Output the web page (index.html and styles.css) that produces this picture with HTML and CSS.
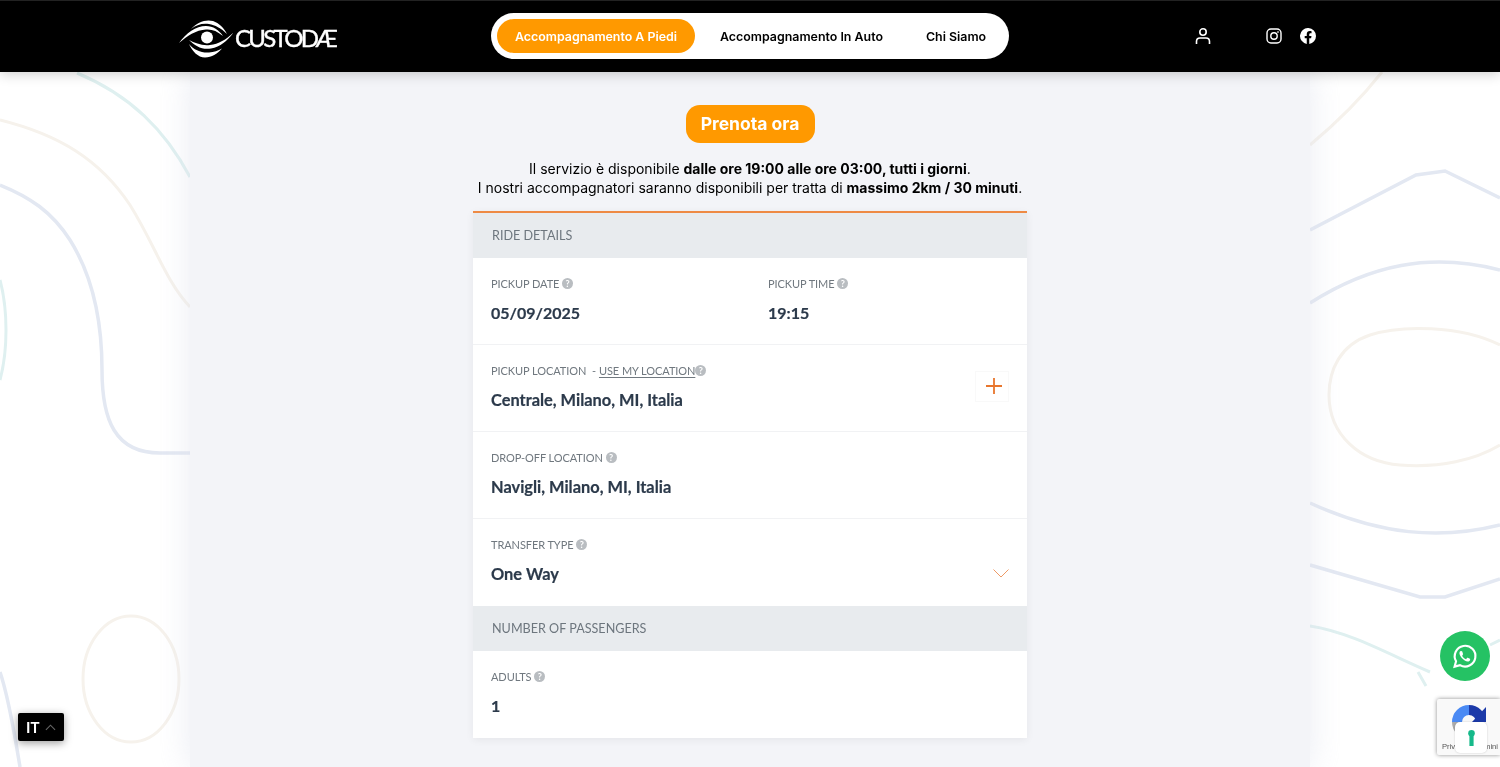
FILE: index.html
```html
<!DOCTYPE html>
<html lang="en">

<head>
    <meta charset="UTF-8">
    <meta name="viewport" content="width=device-width, initial-scale=1.0">
    <title>Custodae - Prenota ora</title>
    <link rel="stylesheet" href="styles.css">
</head>

<body>
    <!-- Decorative map lines behind the page -->
    <svg class="bg-lines" viewBox="0 0 1500 767" fill="none" aria-hidden="true">
        <g stroke="#e3e8f2" stroke-width="3.5">
            <path d="M0 185C30 197 52 212 70 240C92 275 102 320 102 370C102 420 115 453 160 453H190" />
            <path d="M0 672C8 695 14 730 20 767" />
            <path d="M1310 230L1416 175L1445 171L1500 198" />
            <path d="M1310 303C1370 265 1430 252 1500 270" />
            <path d="M1310 503C1380 535 1440 540 1500 525" />
            <path d="M1310 565L1420 597H1445L1500 579" />
        </g>
        <g stroke="#f6f2ec" stroke-width="3">
            <path d="M0 120C60 135 100 160 130 205C155 245 165 280 190 307" />
            <path d="M1310 145C1340 120 1360 100 1382 72" />
            <ellipse cx="131" cy="679" rx="48" ry="63" />
            <path d="M1500 345C1460 325 1400 325 1370 335C1340 345 1329 370 1329 395C1329 435 1360 462 1400 465C1440 468 1475 460 1500 445" />
        </g>
        <g stroke="#dff0f0" stroke-width="3">
            <path d="M77 73C130 95 165 130 190 177" />
            <path d="M0 280C8 310 8 350 0 380" />
            <path d="M1310 626C1350 632 1390 655 1430 672M1418 672L1426 686M1490 645L1500 640" />
        </g>
    </svg>

    <header class="topbar">
        <div class="logo">
            <svg class="logo-eye" viewBox="0 0 54 38" fill="#fff">
                <circle cx="28" cy="17.5" r="6" />
                <path d="M0 23C7 13 17 6 27 6C34 6 40 10 44 16C38 11 33 9 27 9.500C17 10 8 16 0 23Z" />
                <path d="M12 9C18 2 27 -1 34 1C40 3 45 8 48 14C42 8 36 5 30 4C23 3 17 5 12 9Z" />
                <path d="M55 12C49 20 42 27 32 28.500C23 30 16 26 10 20C16 23 23 26 31 25C40 24 48 19 55 12Z" />
                <path d="M10 24C15 30 22 33 30 32.500C35 32 39 31 43 28.500C38 34 33 37.500 26 37.500C19 37.500 13 31 10 24Z" />
            </svg>
            <span class="logo-text">CUSTODÆ</span>
        </div>

        <nav class="main-nav">
            <a class="nav-link active">Accompagnamento A Piedi</a>
            <a class="nav-link">Accompagnamento In Auto</a>
            <a class="nav-link">Chi Siamo</a>
        </nav>

        <div class="top-icons">
            <svg class="icon-user" viewBox="0 0 16 16" fill="none" stroke="#fff" stroke-width="1.6">
                <circle cx="8" cy="4" r="3.2" />
                <path d="M1.5 16V13.500C1.500 11.300 3 10 5 10H11C13 10 14.500 11.300 14.500 13.500V16" />
            </svg>
            <svg class="icon-insta" viewBox="0 0 16 16" fill="none" stroke="#fff" stroke-width="1.4">
                <rect x="1" y="1" width="14" height="14" rx="4" />
                <circle cx="8" cy="8" r="3.2" />
                <circle cx="12" cy="4" r=".6" fill="#fff" stroke-width=".5" />
            </svg>
            <svg class="icon-fb" viewBox="0 0 16 16">
                <path fill="#fff" d="M16 8A8 8 0 1 0 6.750 15.900V10.300H4.700V8H6.750V6.200C6.750 4.200 7.950 3.100 9.770 3.100C10.650 3.100 11.560 3.250 11.560 3.250V5.200H10.550C9.560 5.200 9.250 5.820 9.250 6.450V8H11.470L11.110 10.300H9.250V15.900A8 8 0 0 0 16 8Z" />
            </svg>
        </div>
    </header>

    <main class="content">
        <div class="book-btn">Prenota ora</div>

        <p class="intro">
            Il servizio è disponibile <b>dalle ore 19:00 alle ore 03:00, tutti i giorni</b>.<br>
            I nostri accompagnatori saranno disponibili per tratta di <b>massimo 2km / 30 minuti</b>.
        </p>

        <section class="card">
            <div class="card-head">RIDE DETAILS</div>

            <div class="row row-split">
                <div class="field">
                    <div class="label">PICKUP DATE <i class="help">?</i></div>
                    <div class="value value-num">05/09/2025</div>
                </div>
                <div class="field">
                    <div class="label">PICKUP TIME <i class="help">?</i></div>
                    <div class="value value-num">19:15</div>
                </div>
            </div>

            <div class="row">
                <div class="field">
                    <div class="label">PICKUP LOCATION <span class="dash">-</span> <u>USE MY LOCATION</u> <i class="help">?</i></div>
                    <div class="value">Centrale, Milano, MI, Italia</div>
                </div>
                <div class="add-stop">
                    <svg viewBox="0 0 16 16" stroke="#e8762d" stroke-width="1.8">
                        <path d="M8 0V16M0 8H16" />
                    </svg>
                </div>
            </div>

            <div class="row">
                <div class="field">
                    <div class="label">DROP-OFF LOCATION <i class="help">?</i></div>
                    <div class="value">Navigli, Milano, MI, Italia</div>
                </div>
            </div>

            <div class="row row-last">
                <div class="field">
                    <div class="label">TRANSFER TYPE <i class="help">?</i></div>
                    <div class="value">One Way</div>
                </div>
                <svg class="select-arrow" viewBox="0 0 16 9" fill="none" stroke="#ee9a66">
                    <path d="M.5 .5L8 8L15.500 .5" />
                </svg>
            </div>

            <div class="card-head">NUMBER OF PASSENGERS</div>

            <div class="row row-last">
                <div class="field">
                    <div class="label">ADULTS <i class="help">?</i></div>
                    <div class="value value-num">1</div>
                </div>
            </div>
        </section>
    </main>

    <!-- Floating widgets -->
    <div class="lang-switch">
        <span>IT</span>
        <svg viewBox="0 0 12 7" fill="none" stroke="#666" stroke-width="1.2">
            <path d="M1 6L6 1L11 6" />
        </svg>
    </div>

    <div class="whatsapp">
        <svg viewBox="0 0 24 24" fill="none">
            <path stroke="#fff" stroke-width="1.9" d="M3.200 21L4.500 16.200A9.200 9.200 0 1 1 8 19.700Z" />
            <path fill="#fff" d="M9 7C8.600 7 8 7.300 7.700 8C7.200 9.200 7.700 11 9.400 13C11.200 15 13.200 16.300 14.900 16.400C16 16.400 16.900 15.600 17 14.800C17.100 14.400 17 14.200 16.800 14.100L14.900 13.200C14.600 13.100 14.400 13.200 14.200 13.400L13.600 14.200C13.400 14.400 13.200 14.400 12.900 14.300C11.600 13.700 10.700 12.800 10 11.600C9.900 11.300 9.900 11.100 10.100 11L10.600 10.300C10.800 10.100 10.800 9.900 10.700 9.700L10 7.600C9.800 7.100 9.500 7 9 7Z" />
        </svg>
    </div>

    <div class="recaptcha">
        <svg class="recaptcha-logo" viewBox="0 0 34 34" fill="none" stroke-width="10">
            <path stroke="#ababab" d="M17 29A12 12 0 0 1 5 17" />
            <path stroke="#4a8af4" d="M5 17A12 12 0 0 1 17 5" />
            <path stroke="#1c3aa9" d="M17 5A12 12 0 0 1 29 17" />
            <path fill="#1c3aa9" stroke="none" d="M34 2V17H20Z" />
        </svg>
        <span class="recaptcha-text">Privacy - Termini</span>
        <div class="iubenda-badge">
            <svg viewBox="0 0 7 16" fill="#16b98a">
                <circle cx="3.500" cy="3.300" r="3.300" />
                <path d="M1.400 5H5.600V16H1.400Z" />
            </svg>
        </div>
    </div>
</body>

</html>
```

FILE: styles.css
```css
* {
    box-sizing: border-box;
    margin: 0;
    padding: 0;
}

html,
body {
    height: 767px;
    overflow: hidden;
}

body {
    background: #fff;
    font-family: "Lato", sans-serif;
}

.bg-lines {
    position: fixed;
    top: 0;
    left: 0;
    width: 1500px;
    height: 767px;
    z-index: 0;
}

/* Top bar */
.topbar {
    position: relative;
    z-index: 2;
    height: 72px;
    background: #000;
    border-top: 1px solid #222;
    box-shadow: 0 2px 12px rgba(0, 0, 0, 0.2);
    display: flex;
    align-items: center;
    padding: 0 184px 2px 179px;
}

.logo {
    display: flex;
    align-items: center;
    width: 312px;
    margin-top: 3px;
    gap: 2px;
    color: #fff;
}

.logo-eye {
    width: 54px;
    height: 38px;
    margin-top: 3px;
}

.logo-text {
    font-family: "Lato", sans-serif;
    font-size: 24px;
    font-weight: 400;
    letter-spacing: -2.7px;
    -webkit-text-stroke: 0.4px #fff;
}

.main-nav {
    display: flex;
    align-items: center;
    width: 518px;
    height: 46px;
    padding: 0 6px;
    background: #fff;
    border-radius: 23px;
}

.nav-link {
    font-family: "Inter", sans-serif;
    font-size: 12.4px;
    font-weight: 600;
    color: #000;
    height: 34px;
    padding: 0 18px;
    margin-right: 7px;
    line-height: 35px;
    white-space: nowrap;
}

.nav-link.active {
    background: #ff9900;
    color: #fff;
    border-radius: 17px;
}

.top-icons {
    display: flex;
    align-items: center;
    margin-left: auto;
}

.icon-user {
    width: 16px;
    height: 16px;
    margin-right: 55px;
}

.icon-insta {
    width: 16px;
    height: 16px;
    margin-right: 18px;
}

.icon-fb {
    width: 16px;
    height: 16px;
}

/* Main column */
.content {
    position: relative;
    z-index: 1;
    width: 1120px;
    height: 695px;
    margin: 0 auto;
    padding-top: 33px;
    background: #f3f4f8;
    box-shadow: 0 0 30px rgba(220, 224, 235, 0.6);
    display: flex;
    flex-direction: column;
    align-items: center;
}

.book-btn {
    width: 129px;
    height: 38px;
    line-height: 38px;
    background: #ff9900;
    border-radius: 14px;
    color: #fff;
    font-family: "Inter", sans-serif;
    font-size: 17.5px;
    font-weight: 700;
    text-align: center;
}

.intro {
    margin-top: 16px;
    font-family: "Inter", sans-serif;
    font-size: 14px;
    line-height: 19px;
    color: #000;
    text-align: center;
    white-space: nowrap;
}

/* Booking card */
.card {
    width: 554px;
    margin-top: 14px;
    background: #fff;
    border-top: 2px solid #ee8a44;
    box-shadow: 0 2px 8px rgba(0, 0, 0, 0.06);
}

.card-head {
    height: 45px;
    line-height: 45px;
    padding-left: 19px;
    background: #e8ebee;
    color: #6d767e;
    font-size: 12.6px;
}

.row {
    display: flex;
    justify-content: space-between;
    align-items: flex-start;
    height: 87px;
    padding: 18px 18px 0;
    border-bottom: 1px solid #f1f2f4;
}

.row-last {
    border-bottom: 0;
}

.row-split {
    display: grid;
    grid-template-columns: 277px 1fr;
}

.label {
    display: flex;
    align-items: center;
    height: 14px;
    color: #70787f;
    font-size: 11px;
    letter-spacing: -0.08px;
    white-space: pre-wrap;
}

.label u {
    text-underline-offset: 2px;
}

.dash {
    margin: 0 3px;
}

.help {
    width: 11px;
    height: 11px;
    border-radius: 50%;
    background: #b9bdc1;
    color: #fff;
    font-size: 9px;
    font-weight: 700;
    font-style: normal;
    line-height: 11px;
    text-align: center;
}

.value {
    margin-top: 12px;
    color: #2c3a4b;
    font-size: 16.4px;
    font-weight: 700;
    line-height: 22px;
    -webkit-text-stroke: 0.2px #2c3a4b;
}

.value-num {
    font-size: 16px;
}

.add-stop {
    width: 34px;
    height: 31px;
    margin-top: 8px;
    padding: 6px 9px 6px 10px;
    border: 1px solid #f9f9f9;
}

.add-stop svg {
    display: block;
    width: 16px;
    height: 16px;
}

.select-arrow {
    width: 16px;
    height: 9px;
    margin-top: 32px;
}

/* Floating widgets */
.lang-switch {
    position: fixed;
    left: 18px;
    top: 713px;
    z-index: 3;
    width: 46px;
    height: 28px;
    display: flex;
    align-items: center;
    gap: 6px;
    padding-left: 8px;
    background: #000;
    border-radius: 2px;
    box-shadow: 0 2px 8px rgba(0, 0, 0, 0.4);
    color: #fff;
    font-size: 15px;
    font-weight: 700;
}

.lang-switch svg {
    width: 11px;
    height: 7px;
}

.whatsapp {
    position: fixed;
    left: 1440px;
    top: 631px;
    z-index: 3;
    width: 50px;
    height: 50px;
    display: flex;
    align-items: center;
    justify-content: center;
    background: #25c264;
    border-radius: 50%;
}

.whatsapp svg {
    width: 27px;
    height: 27px;
    margin-left: -2px;
}

.recaptcha {
    position: fixed;
    left: 1437px;
    top: 699px;
    z-index: 3;
    width: 63px;
    height: 56px;
    background: #f9f9f9;
    border-radius: 2px 0 0 2px;
    box-shadow: 0 0 4px rgba(0, 0, 0, 0.45);
}

.recaptcha-logo {
    position: absolute;
    left: 15px;
    top: 6px;
    width: 34px;
    height: 34px;
}

.recaptcha-text {
    position: absolute;
    left: 5px;
    top: 43px;
    font-family: "Liberation Sans", sans-serif;
    font-size: 7.6px;
    color: #555;
    white-space: nowrap;
}

.iubenda-badge {
    position: absolute;
    left: 18px;
    top: 23px;
    width: 32px;
    height: 31px;
    background: #fff;
    border-radius: 5px;
    box-shadow: 0 0 2px rgba(0, 0, 0, 0.2);
    display: flex;
    align-items: center;
    justify-content: center;
}

.iubenda-badge svg {
    width: 7px;
    height: 16px;
}
```
